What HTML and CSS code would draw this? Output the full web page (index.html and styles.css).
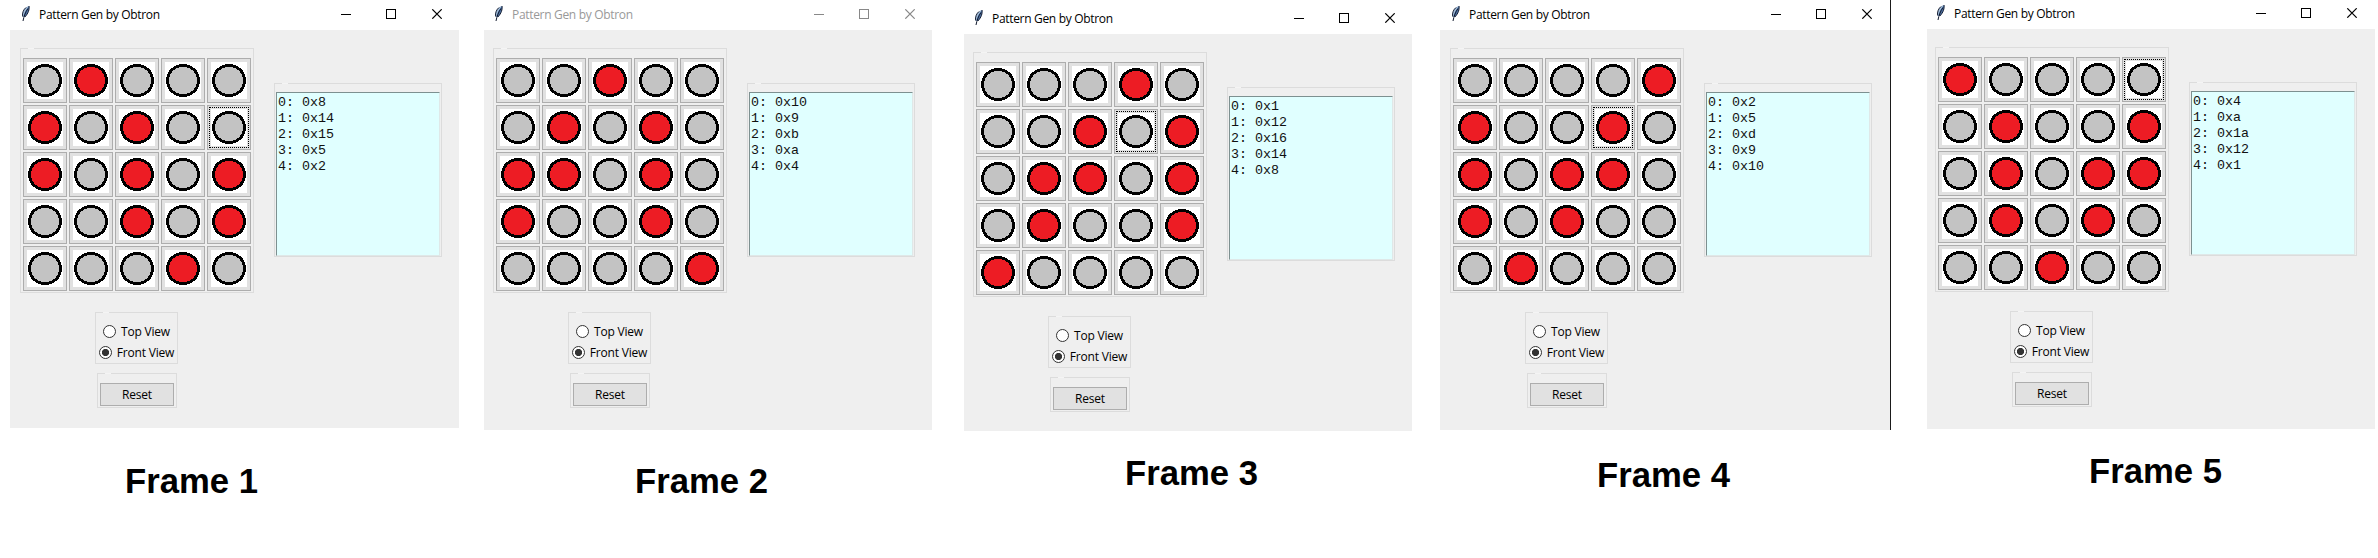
FILE: index.html
```
<!DOCTYPE html>
<html lang="en">
<head>
<meta charset="utf-8">
<title>Pattern Gen by Obtron</title>
<link rel="stylesheet" href="styles.css">
<script src="app.js" defer></script>
</head>
<body>
<main class="frames" id="frames"></main>
<template id="frame-template">
  <section class="frame">
    <div class="window">
      <header class="titlebar">
        <svg class="feather" width="12" height="18" viewBox="0 0 12 18">
          <path d="M2.700 11.500C2 7 5 2.500 9 1c.6 3-.6 7.500-4.200 11z" fill="#4f74a6"/>
          <path d="M2.700 11.500C2 7 5 2.500 9 1 5.800 4.500 4.200 8 3.400 12z" fill="#a9c3de"/>
          <path d="M9 1c.6 3-.6 7.500-4.200 11M2.700 11.500C2 8 3.500 4.500 6 2.500M8 3.500C5.500 7 4 11 3 16" fill="none" stroke="#10182c"/>
        </svg>
        <h1 class="title">Pattern Gen by Obtron</h1>
        <svg class="controls" width="101" height="10" viewBox="0 0 101 10">
          <path d="M0 5.500h10M45.500.5h9v9h-9z" fill="none" stroke="currentColor" shape-rendering="crispEdges"/>
          <path d="M91.300.3l9.400 9.400M100.700.3l-9.400 9.400" fill="none" stroke="currentColor" stroke-width="1.200"/>
        </svg>
      </header>
      <div class="client">
        <div class="left">
          <div class="group board"></div>
          <div class="group views">
            <label class="radio"><span class="dot"></span><span>Top View</span></label>
            <label class="radio"><span class="dot checked"></span><span>Front View</span></label>
          </div>
          <div class="group actions"><button class="reset">Reset</button></div>
        </div>
        <div class="group output"><pre class="codes"></pre></div>
      </div>
    </div>
    <h2 class="caption"></h2>
  </section>
</template>
</body>
</html>
```
FILE: styles.css
```
* { box-sizing: border-box; }
body {
  margin: 0;
  background: #fff;
  color: #000;
  font: 12px/16px "Open Sans", "Noto Sans", sans-serif;
}
.frames { display: flex; align-items: flex-start; height: 558px; overflow: hidden; }
.frame {
  --bar: 30px; --body: 400px; --pad: 10px; --width: 448px;
  flex: none;
  width: var(--width);
}
.frame-1 { margin-left: 10px; --width: 449px; --body: 398px; --cap-x: 115px; --cap-y: 34px; }
.frame-2 { margin-left: 25px; --pad: 9px; --cap-x: 151px; --cap-y: 32px; }
.frame-3 { margin-left: 32px; --bar: 34px; --body: 397px; --pad: 9px; --cap-x: 161px; --cap-y: 23px; }
.frame-4 { margin-left: 28px; --width: 451px; --cap-x: 157px; --cap-y: 26px; }
.frame-5 { margin-left: 36px; --bar: 29px; --pad: 8px; --cap-x: 162px; --cap-y: 23px; }
.frame-4 .window { border-right: 1px solid #1a1a1a; }

.titlebar {
  display: flex;
  align-items: flex-end;
  height: var(--bar);
  padding-left: var(--pad);
}
.feather { flex: none; margin: 0 0 7px 0; }
.title {
  width: 302px;
  margin: 0 0 7px 7px;
  font-size: 12px;
  font-weight: 400;
  line-height: 16px;
  letter-spacing: -0.32px;
  white-space: nowrap;
}
.controls { flex: none; margin-bottom: 11px; }
.frame-2 .title { color: #999; }
.frame-2 .controls { color: #888; }

.client {
  display: flex;
  align-items: flex-start;
  gap: 20px;
  height: var(--body);
  padding: 18px 0 0 var(--pad);
  background: #efefef;
}
.left { width: 234px; }
.group { position: relative; border: 1px solid #dcdcdc; }
.group::before {
  content: "";
  position: absolute;
  left: 7px;
  top: -1px;
  width: 6px;
  height: 1px;
  background: #f4f4f4;
}
.board {
  display: grid;
  grid-template-columns: repeat(5, 44px);
  grid-auto-rows: 45px;
  gap: 2px;
  height: 245px;
  padding: 9px 2px 0;
}
.led {
  --fill: #c3c3c3;
  border: 1px solid #adadad;
  padding: 3px;
  background:
    radial-gradient(ellipse 17px 16.5px at 50% 50%, var(--fill) 83%, #000 83%, #000 100%, #fff 100%) content-box,
    #e1e1e1;
}
.led.on { --fill: #ed1c24; }
.led.focus { outline: 1px dotted #000; outline-offset: -3px; }

.views {
  display: flex;
  flex-direction: column;
  align-items: center;
  gap: 6px;
  width: 83px;
  height: 52px;
  margin: 19px 0 0 75px;
  padding-top: 11px;
}
.radio {
  display: flex;
  align-items: center;
  gap: 5px;
  line-height: 15px;
  letter-spacing: -0.2px;
  white-space: nowrap;
}
.dot {
  width: 13px;
  height: 13px;
  border: 1px solid #333;
  border-radius: 50%;
  background: #fff;
}
.dot.checked { background: radial-gradient(circle, #333 3.2px, #fff 4px); }
.actions { width: 80px; height: 35px; margin: 9px 0 0 77px; padding: 9px 2px 0; }
.reset {
  display: block;
  width: 74px;
  height: 23px;
  border: 1px solid #adadad;
  padding: 0;
  background: #e1e1e1;
  color: #000;
  font: inherit;
  letter-spacing: -0.2px;
}

.output { width: 168px; height: 174px; margin-top: 35px; padding: 8px 1px 0; }
.codes {
  height: 164px;
  margin: 0;
  border: 1px solid;
  border-color: #7d9090 #dfe8e8 #dfe8e8 #7d9090;
  padding: 2px 1px 0;
  background: #e0ffff;
  color: #111;
  font: 13.333px/16px "Liberation Mono", monospace;
}
.caption {
  margin: var(--cap-y) 0 0 var(--cap-x);
  font: bold 34.67px/38px "Liberation Sans", sans-serif;
  white-space: nowrap;
}
```
FILE: app.js
```
// LED rows: "#" is lit, "." is off. focus is the index of the focused LED.
const frames = [
  { rows: ".#... #.#.. #.#.# ..#.# ...#.", focus: 9, codes: ["0x8", "0x14", "0x15", "0x5", "0x2"] },
  { rows: "..#.. .#.#. ##.#. #..#. ....#", focus: -1, codes: ["0x10", "0x9", "0xb", "0xa", "0x4"] },
  { rows: "...#. ..#.# .##.# .#..# #....", focus: 8, codes: ["0x1", "0x12", "0x16", "0x14", "0x8"] },
  { rows: "....# #..#. #.##. #.#.. .#...", focus: 8, codes: ["0x2", "0x5", "0xd", "0x9", "0x10"] },
  { rows: "#.... .#..# .#.## .#.#. ..#..", focus: 4, codes: ["0x4", "0xa", "0x1a", "0x12", "0x1"] },
];

const template = document.getElementById("frame-template");
frames.forEach(({ rows, focus, codes }, n) => {
  const node = template.content.cloneNode(true);
  node.querySelector(".frame").classList.add(`frame-${n + 1}`);
  const board = node.querySelector(".board");
  [...rows.replaceAll(" ", "")].forEach((cell, i) => {
    const led = document.createElement("button");
    led.className = "led";
    led.classList.toggle("on", cell === "#");
    led.classList.toggle("focus", i === focus);
    board.append(led);
  });
  node.querySelector(".codes").textContent = codes.map((c, i) => `${i}: ${c}`).join("\n");
  node.querySelector(".caption").textContent = `Frame ${n + 1}`;
  document.getElementById("frames").append(node);
});
```
